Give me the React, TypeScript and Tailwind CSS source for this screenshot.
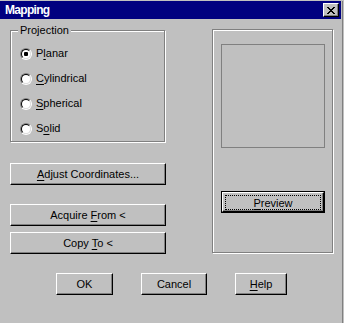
import React from "react";

const FONT = "font-['Liberation_Sans',Arial,sans-serif] text-[11px] leading-[13px] text-black";

function U({ children }: { children: React.ReactNode }) {
  return <span className="underline underline-offset-[2px] decoration-[1px]">{children}</span>;
}

function Btn({ w, children }: { w: string; children: React.ReactNode }) {
  return (
    <div
      className={`flex h-[22px] items-center justify-center border border-t-white border-l-white border-r-black border-b-black shadow-[inset_-1px_-1px_0_#808080] ${w}`}
    >
      <span className="pt-[1px]">{children}</span>
    </div>
  );
}

function Radio({ checked, children }: { checked?: boolean; children: React.ReactNode }) {
  return (
    <div className="flex h-[25px] items-center pl-[9px]">
      <div className="h-[12px] w-[12px] rounded-full border border-t-[#808080] border-l-[#808080] border-r-white border-b-white">
        <div className="flex h-full w-full items-center justify-center rounded-full border border-t-black border-l-black border-r-[#dfdfdf] border-b-[#dfdfdf] bg-white">
          {checked && <div className="h-[4px] w-[4px] rounded-[1px] bg-black" />}
        </div>
      </div>
      <span className="ml-[4px]">{children}</span>
    </div>
  );
}

function CloseGlyph() {
  const rows = ["11000011", "01100110", "00111100", "00011000", "00111100", "01100110", "11000011"];
  const rects: React.ReactNode[] = [];
  rows.forEach((r, y) =>
    r.split("").forEach((c, x) => {
      if (c === "1") rects.push(<rect key={`${x}-${y}`} x={x} y={y} width={1} height={1} fill="#000" />);
    })
  );
  return (
    <svg width="8" height="7" viewBox="0 0 8 7" shapeRendering="crispEdges">
      {rects}
    </svg>
  );
}

export default function App() {
  return (
    <div className={`h-[323px] w-[344px] overflow-hidden bg-[#c0c0c0] pt-[1px] ${FONT}`}>
      <div className="flex h-[322px] w-[343px] flex-col border-r border-r-[#808080]">
        {/* Title bar */}
        <div className="flex h-[18px] w-[341px] items-center justify-between bg-[#000080] pl-[5px] pr-[2px]">
          <span className="text-[12px] font-bold tracking-[-0.7px] text-white">Mapping</span>
          <div className="flex h-[14px] w-[16px] items-center justify-center border border-t-white border-l-white border-r-black border-b-black bg-[#c0c0c0] shadow-[inset_-1px_-1px_0_#808080]">
            <CloseGlyph />
          </div>
        </div>

        {/* Body */}
        <div className="flex">
          {/* Left column */}
          <div className="flex w-[166px] flex-col pl-[10px]">
            <div className="relative mt-[11px] flex h-[112px] w-[155px] flex-col border border-[#808080] pt-[10px] shadow-[inset_1px_1px_0_#fff,1px_1px_0_#fff]">
              <span className="absolute left-[7px] top-[-7px] bg-[#c0c0c0] px-[2px]">Projection</span>
              <Radio checked>
                P<U>l</U>anar
              </Radio>
              <Radio>
                <U>C</U>ylindrical
              </Radio>
              <Radio>
                <U>S</U>pherical
              </Radio>
              <Radio>
                S<U>o</U>lid
              </Radio>
            </div>
            <div className="mt-[21px]">
              <Btn w="w-[156px]">
                <U>A</U>djust Coordinates...
              </Btn>
            </div>
            <div className="mt-[19px]">
              <Btn w="w-[156px]">
                Acquire <U>F</U>rom &lt;
              </Btn>
            </div>
            <div className="mt-[6px]">
              <Btn w="w-[156px]">
                Copy <U>T</U>o &lt;
              </Btn>
            </div>
          </div>

          {/* Right column */}
          <div className="ml-[46px] mt-[10px] flex h-[224px] w-[121px] flex-col border border-[#808080] pl-[8px] pt-[14px] shadow-[inset_1px_1px_0_#fff,1px_1px_0_#fff]">
            <div className="h-[104px] w-[104px] border border-[#808080]" />
            <div className="mt-[43px] flex h-[22px] w-[104px] border border-black">
              <div className="flex flex-1 border border-t-white border-l-white border-r-black border-b-black px-[2px] pb-[1px] pt-[2px] shadow-[inset_-1px_-1px_0_#808080]">
                <div className="flex flex-1 items-center justify-center border border-dotted border-black">
                  <span className="pt-[1px]">
                    <U>P</U>review
                  </span>
                </div>
              </div>
            </div>
          </div>
        </div>

        {/* Bottom buttons */}
        <div className="mt-[19px] flex gap-[28px] pl-[56px]">
          <Btn w="w-[57px]">OK</Btn>
          <Btn w="w-[66px]">Cancel</Btn>
          <Btn w="w-[52px]">
            <U>H</U>elp
          </Btn>
        </div>
      </div>
    </div>
  );
}
